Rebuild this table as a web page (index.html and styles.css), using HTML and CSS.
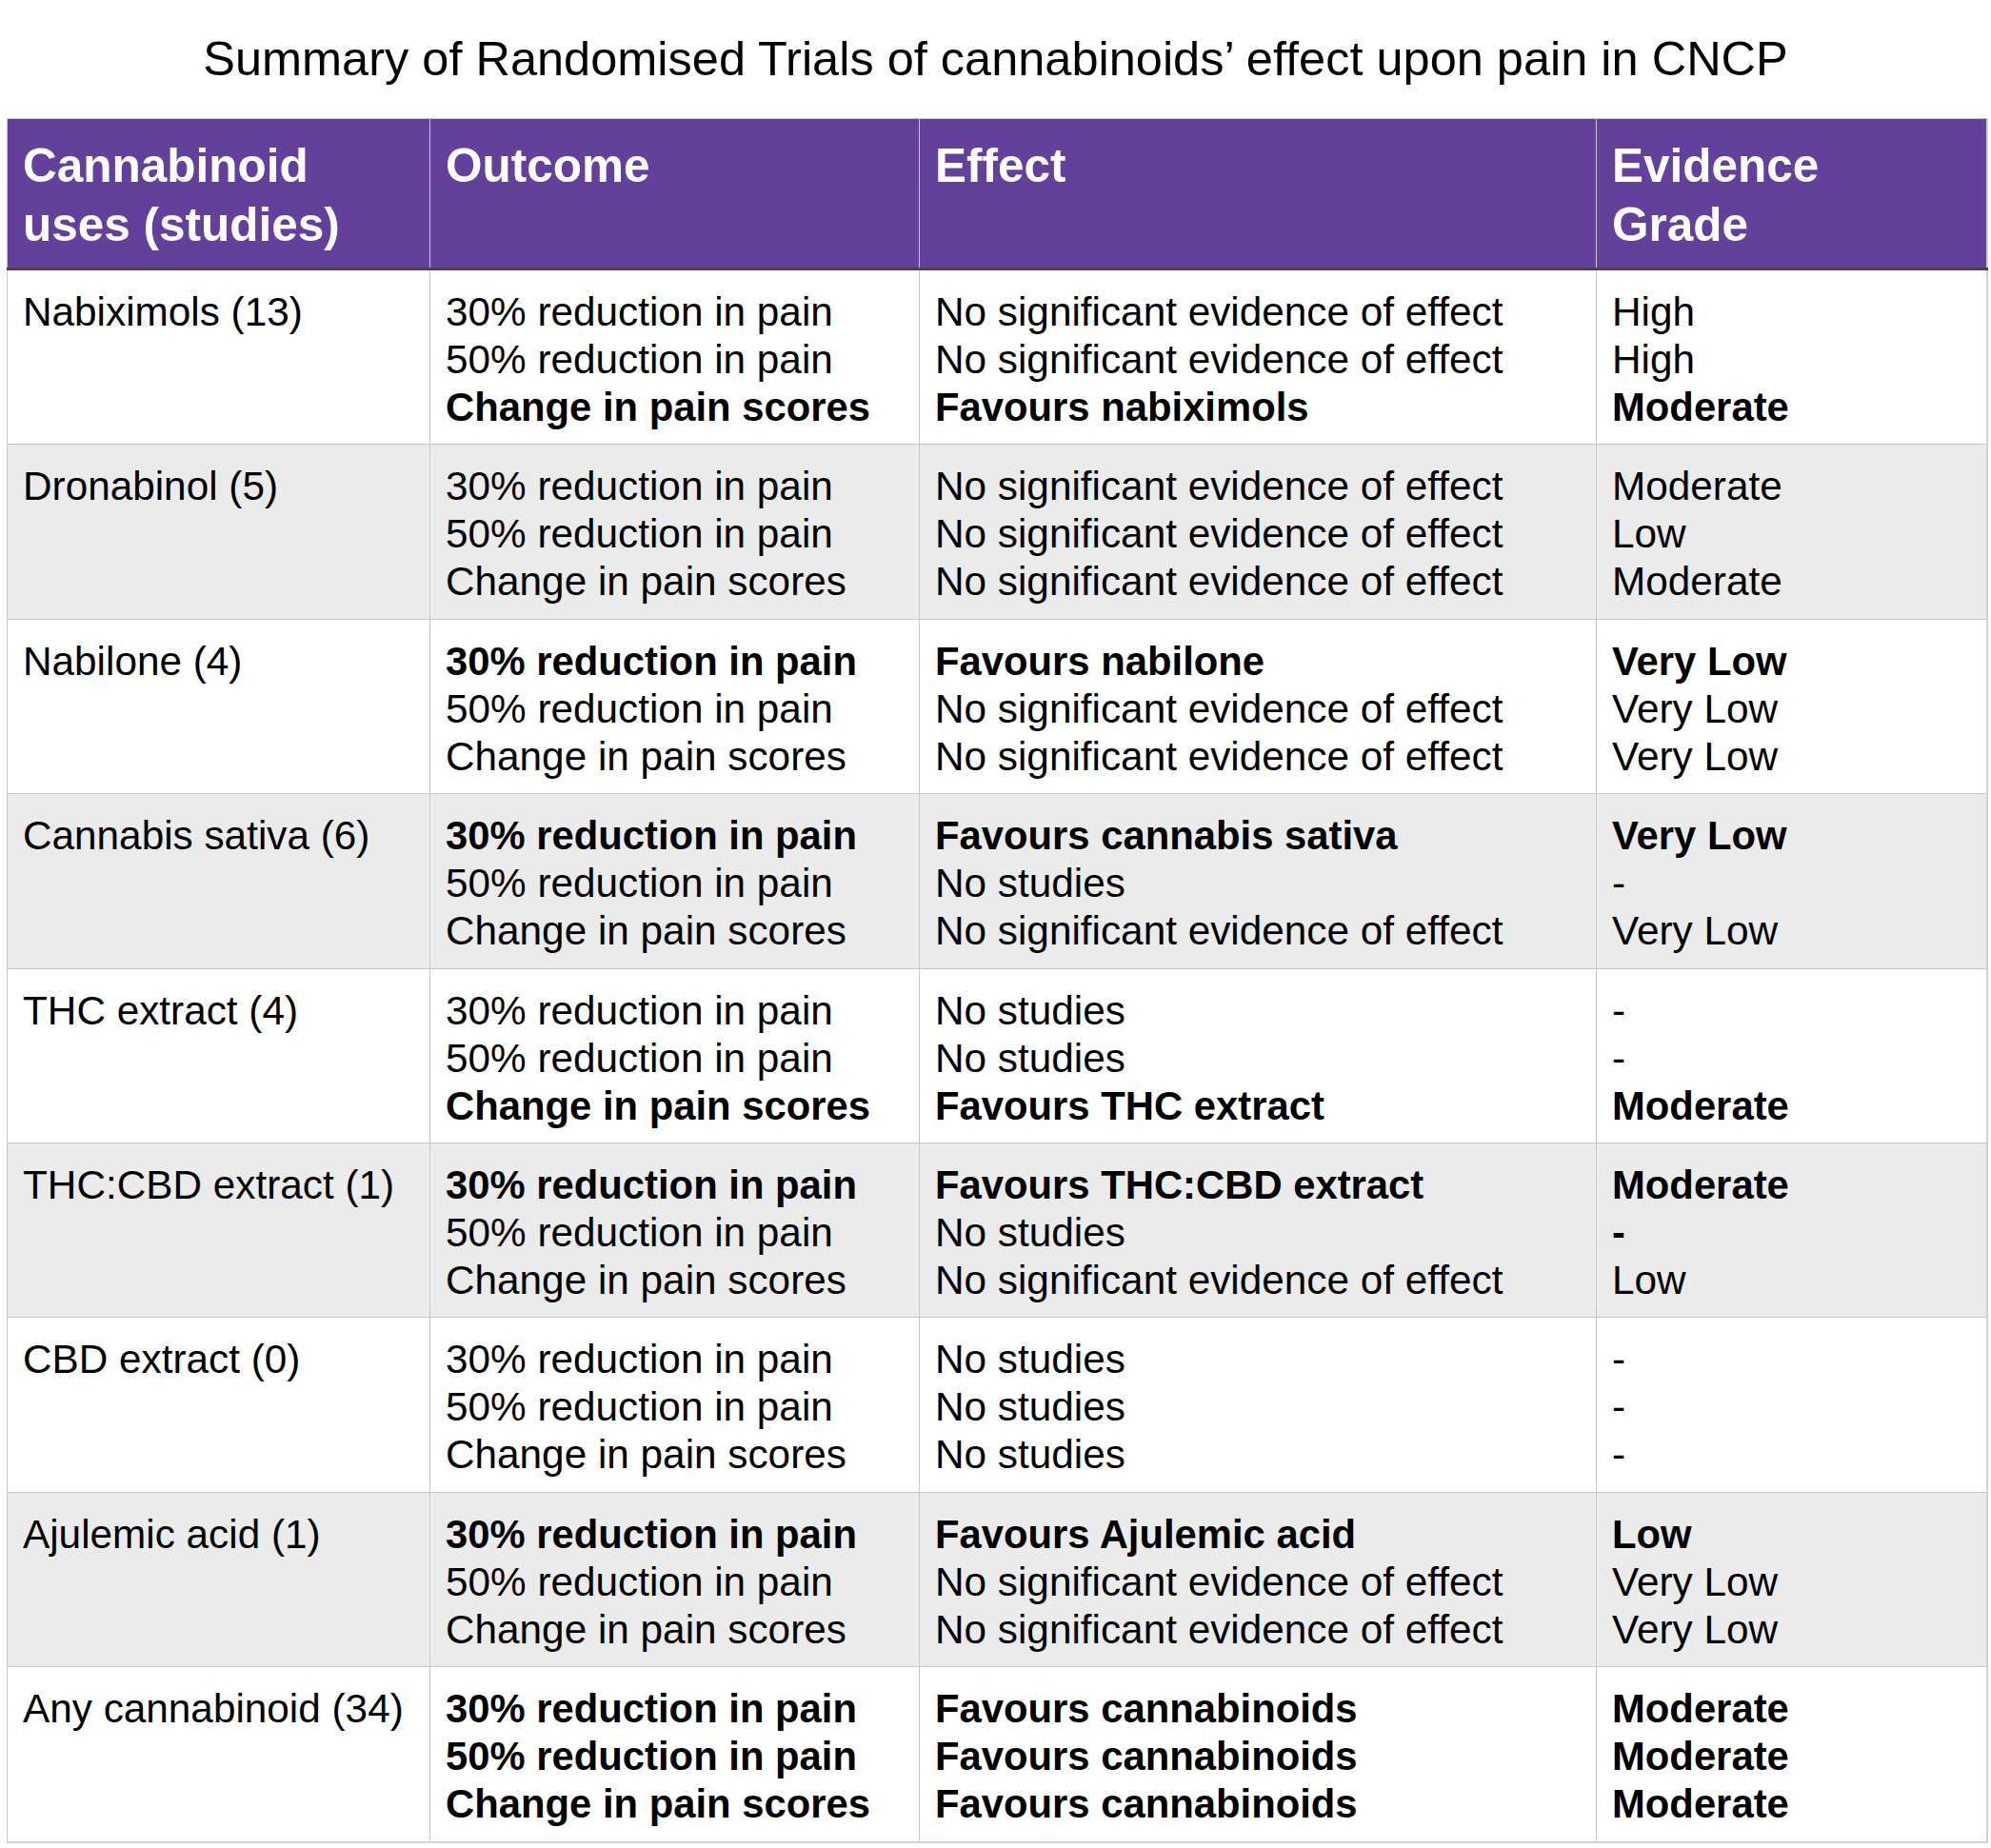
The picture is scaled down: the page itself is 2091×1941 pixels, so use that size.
FILE: index.html
```html
<!DOCTYPE html>
<html lang="en">
<head>
<meta charset="utf-8">
<title>Summary of Randomised Trials</title>
<link rel="stylesheet" href="styles.css">
</head>
<body>
<h1 class="title">Summary of Randomised Trials of cannabinoids’ effect upon pain in CNCP</h1>
<table class="summary">
  <colgroup>
    <col class="c1"><col class="c2"><col class="c3"><col class="c4">
  </colgroup>
  <thead>
    <tr>
      <th>Cannabinoid uses (studies)</th>
      <th>Outcome</th>
      <th>Effect</th>
      <th>Evidence<br>Grade</th>
    </tr>
  </thead>
  <tbody>
    <tr>
      <td>Nabiximols (13)</td>
      <td><div>30% reduction in pain</div><div>50% reduction in pain</div><div class="b">Change in pain scores</div></td>
      <td><div>No significant evidence of effect</div><div>No significant evidence of effect</div><div class="b">Favours nabiximols</div></td>
      <td><div>High</div><div>High</div><div class="b">Moderate</div></td>
    </tr>
    <tr class="alt">
      <td>Dronabinol (5)</td>
      <td><div>30% reduction in pain</div><div>50% reduction in pain</div><div>Change in pain scores</div></td>
      <td><div>No significant evidence of effect</div><div>No significant evidence of effect</div><div>No significant evidence of effect</div></td>
      <td><div>Moderate</div><div>Low</div><div>Moderate</div></td>
    </tr>
    <tr>
      <td>Nabilone (4)</td>
      <td><div class="b">30% reduction in pain</div><div>50% reduction in pain</div><div>Change in pain scores</div></td>
      <td><div class="b">Favours nabilone</div><div>No significant evidence of effect</div><div>No significant evidence of effect</div></td>
      <td><div class="b">Very Low</div><div>Very Low</div><div>Very Low</div></td>
    </tr>
    <tr class="alt">
      <td>Cannabis sativa (6)</td>
      <td><div class="b">30% reduction in pain</div><div>50% reduction in pain</div><div>Change in pain scores</div></td>
      <td><div class="b">Favours cannabis sativa</div><div>No studies</div><div>No significant evidence of effect</div></td>
      <td><div class="b">Very Low</div><div>-</div><div>Very Low</div></td>
    </tr>
    <tr>
      <td>THC extract (4)</td>
      <td><div>30% reduction in pain</div><div>50% reduction in pain</div><div class="b">Change in pain scores</div></td>
      <td><div>No studies</div><div>No studies</div><div class="b">Favours THC extract</div></td>
      <td><div>-</div><div>-</div><div class="b">Moderate</div></td>
    </tr>
    <tr class="alt">
      <td>THC:CBD extract (1)</td>
      <td><div class="b">30% reduction in pain</div><div>50% reduction in pain</div><div>Change in pain scores</div></td>
      <td><div class="b">Favours THC:CBD extract</div><div>No studies</div><div>No significant evidence of effect</div></td>
      <td><div class="b">Moderate</div><div class="b">-</div><div>Low</div></td>
    </tr>
    <tr>
      <td>CBD extract (0)</td>
      <td><div>30% reduction in pain</div><div>50% reduction in pain</div><div>Change in pain scores</div></td>
      <td><div>No studies</div><div>No studies</div><div>No studies</div></td>
      <td><div>-</div><div>-</div><div>-</div></td>
    </tr>
    <tr class="alt">
      <td>Ajulemic acid (1)</td>
      <td><div class="b">30% reduction in pain</div><div>50% reduction in pain</div><div>Change in pain scores</div></td>
      <td><div class="b">Favours Ajulemic acid</div><div>No significant evidence of effect</div><div>No significant evidence of effect</div></td>
      <td><div class="b">Low</div><div>Very Low</div><div>Very Low</div></td>
    </tr>
    <tr>
      <td>Any cannabinoid (34)</td>
      <td><div class="b">30% reduction in pain</div><div class="b">50% reduction in pain</div><div class="b">Change in pain scores</div></td>
      <td><div class="b">Favours cannabinoids</div><div class="b">Favours cannabinoids</div><div class="b">Favours cannabinoids</div></td>
      <td><div class="b">Moderate</div><div class="b">Moderate</div><div class="b">Moderate</div></td>
    </tr>
  </tbody>
</table>
</body>
</html>
```
FILE: styles.css
```css
html, body {
  margin: 0;
  padding: 0;
  background: #ffffff;
}

body {
  font-family: "Liberation Sans", Arial, Helvetica, sans-serif;
  color: #000000;
}

.title {
  margin: 0;
  padding: 32px 0 32px;
  font-size: 50.5px;
  font-weight: normal;
  line-height: 60px;
  text-align: center;
}

.summary {
  margin-left: 7px;
  width: 2079px;
  table-layout: fixed;
  border-collapse: collapse;
}

.c1 { width: 444px; }
.c2 { width: 514px; }
.c3 { width: 711px; }
.c4 { width: 410px; }

.summary th {
  background: #62409b;
  color: #ffffff;
  font-weight: bold;
  font-size: 49.5px;
  line-height: 62px;
  text-align: left;
  vertical-align: top;
  padding: 18px 16px 14px;
  border: 1px solid #c8c8c8;
  border-bottom: 3px solid #454545;
}

.summary td {
  font-size: 42.3px;
  line-height: 50px;
  vertical-align: top;
  text-align: left;
  white-space: nowrap;
  padding: 19px 16px 13.4px;
  border: 1px solid #c6c6c6;
}

.summary th:last-child,
.summary td:last-child {
  border-right: 2px solid #d0d0d0;
}

.summary tbody tr:last-child td {
  border-bottom: 2px solid #d4d4d4;
}

.summary tr.alt td {
  background: #ebebeb;
}

.b {
  font-weight: bold;
  font-size: 41.8px;
}
```
